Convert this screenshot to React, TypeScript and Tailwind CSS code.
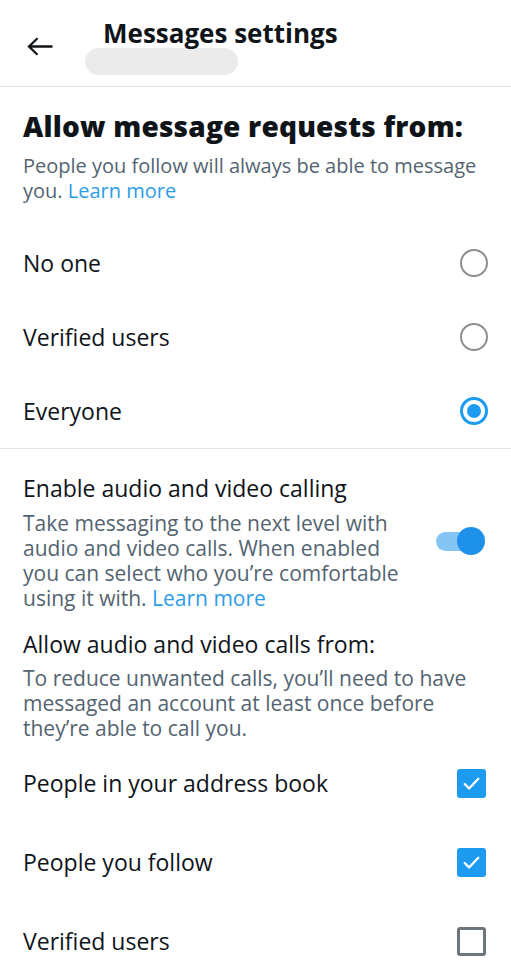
const requestOptions = [
  { label: 'No one', selected: false },
  { label: 'Verified users', selected: false },
  { label: 'Everyone', selected: true },
];

const callOptions = [
  { label: 'People in your address book', checked: true },
  { label: 'People you follow', checked: true },
  { label: 'Verified users', checked: false },
];

function Radio({ selected }: { selected: boolean }) {
  if (selected) {
    return (
      <div className="w-[28px] h-[28px] rounded-full border-[3px] border-[#1d9bf0] flex items-center justify-center">
        <div className="w-[14px] h-[14px] rounded-full bg-[#1d9bf0]" />
      </div>
    );
  }
  return <div className="w-[28px] h-[28px] rounded-full border-2 border-[#8e8e8e]" />;
}

function Checkbox({ checked }: { checked: boolean }) {
  if (checked) {
    return (
      <div className="w-[29px] h-[29px] rounded-[3px] bg-[#1d9bf0] flex items-center justify-center">
        <svg width="21" height="21" viewBox="0 0 20 20" fill="none">
          <path d="M3.5 10.5l4.2 4.2L16.5 5.5" stroke="white" strokeWidth="2.2" strokeLinecap="round" strokeLinejoin="round" />
        </svg>
      </div>
    );
  }
  return <div className="w-[29px] h-[29px] rounded-[3px] border-[3px] border-[#6e767d]" />;
}

export default function App() {
  return (
    <div className="w-[511px] h-[969px] bg-white overflow-hidden text-[#0f1419]" style={{ fontFamily: '"Open Sans", "Noto Sans", sans-serif' }}>
      {/* Header */}
      <div className="h-[87px] border-b border-[#e3e5e7] flex items-start">
        <div className="w-[103px] pl-[27px] pt-[37px]">
          <svg width="26" height="19" viewBox="0 0 26 19" fill="none">
            <path d="M10.5 1.2L2 9.5l8.5 8.3M2 9.5h23.5" stroke="#0f1419" strokeWidth="2.3" strokeLinejoin="miter" />
          </svg>
        </div>
        <div className="pt-[17px]">
          <div className="text-[26px] font-bold leading-[32px]">Messages settings</div>
          <div className="-ml-[18px] -mt-[1px] w-[153px] h-[27px] rounded-full bg-[#ebebeb]" />
        </div>
      </div>

      {/* Message requests */}
      <div className="px-[23px] pt-[21px]">
        <h2 className="text-[28px] font-extrabold leading-[36px] tracking-[0.2px]">Allow message requests from:</h2>
        <p className="mt-[9px] text-[20px] leading-[25px] text-[#536471]">
          People you follow will always be able to message you. <span className="text-[#2b9de8]">Learn more</span>
        </p>
      </div>

      <div className="mt-[23px]">
        {requestOptions.map((o) => (
          <div key={o.label} className="h-[74px] pl-[23px] pr-[23px] flex items-center justify-between">
            <span className="text-[23px]">{o.label}</span>
            <Radio selected={o.selected} />
          </div>
        ))}
      </div>

      <div className="border-t border-[#e3e5e7]" />

      {/* Audio & video */}
      <div className="px-[23px] pt-[25px]">
        <div className="text-[23px] font-medium leading-[28px]">Enable audio and video calling</div>
        <div className="flex items-start justify-between">
          <p className="mt-[9px] w-[395px] text-[21px] leading-[25px] text-[#536471]">
            Take messaging to the next level with audio and video calls. When enabled you can select who you’re comfortable using it with. <span className="text-[#2b9de8]">Learn more</span>
          </p>
          <div className="relative mt-[25px] mr-[3px] w-[49px] h-[28px] flex items-center">
            <div className="w-[40px] h-[19px] rounded-full bg-[#84c5f4]" />
            <div className="absolute right-0 top-0 w-[28px] h-[28px] rounded-full bg-[#1d91ea]" />
          </div>
        </div>

        <div className="mt-[19px] text-[23px] font-medium leading-[28px]">Allow audio and video calls from:</div>
        <p className="mt-[8px] text-[21px] leading-[25px] text-[#536471]">
          To reduce unwanted calls, you’ll need to have messaged an account at least once before they’re able to call you.
        </p>
      </div>

      <div className="mt-[3px]">
        {callOptions.map((o) => (
          <div key={o.label} className="h-[79px] pl-[23px] pr-[25px] flex items-center justify-between">
            <span className="text-[23px]">{o.label}</span>
            <Checkbox checked={o.checked} />
          </div>
        ))}
      </div>
    </div>
  );
}
